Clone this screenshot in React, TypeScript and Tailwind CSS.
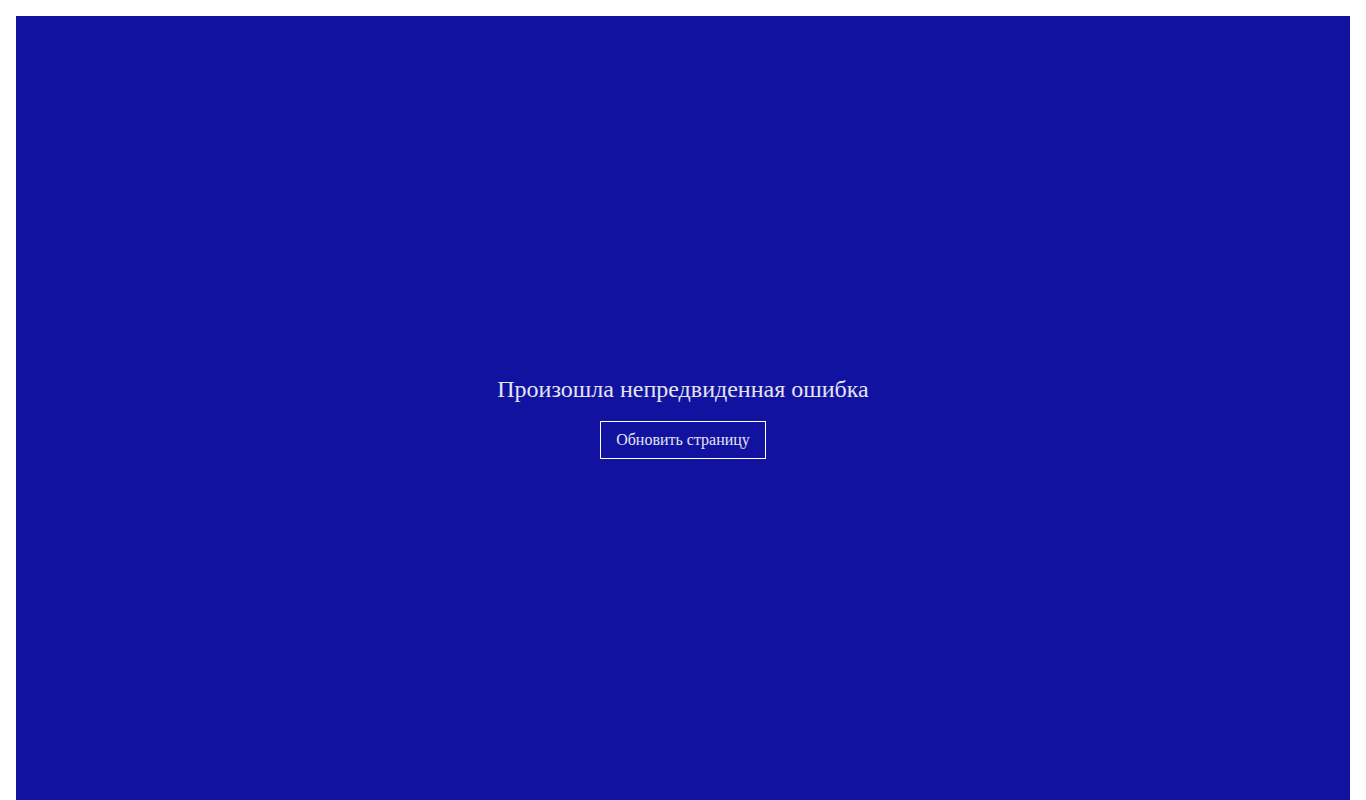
export default function App() {
  return (
    <div className="h-screen overflow-hidden bg-white p-4">
      <div className="flex h-[800px] flex-col items-center justify-center bg-[#1113a0] font-['Liberation_Serif',serif] text-[#e4e4f0]">
        <h1 className="mb-4 text-2xl leading-8">Произошла непредвиденная ошибка</h1>
        <button className="border border-white px-[15px] py-1.5 text-base leading-6">
          Обновить страницу
        </button>
      </div>
    </div>
  )
}
